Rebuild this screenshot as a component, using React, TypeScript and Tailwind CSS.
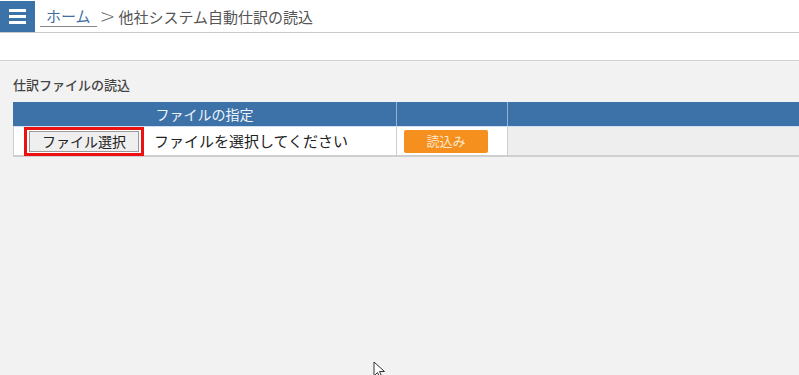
import React from "react";

export default function App() {
  return (
    <div
      className="relative w-[799px] h-[375px] overflow-hidden bg-[#f2f2f2] text-[#333]"
      style={{ fontFamily: '"Noto Sans CJK JP", "Noto Sans", sans-serif' }}
    >
      {/* top bar */}
      <div className="flex h-[33px] items-stretch bg-white border-b border-[#c9c9c9]">
        <div className="mt-[1px] flex w-[35px] flex-col items-center justify-center gap-[3px] bg-[#3b72a8]">
          <span className="block h-[3px] w-[17px] bg-white" />
          <span className="block h-[3px] w-[17px] bg-white" />
          <span className="block h-[3px] w-[17px] bg-white" />
        </div>
        <div className="flex items-center pl-[5px] text-[15px] leading-none text-[#555]">
          <span className="border-b border-[#888] px-[6px] pb-[3px] pt-[3px] text-[#3f6f9f]">ホーム</span>
          <span className="ml-[3px] text-[19px] font-light text-[#666]" style={{ fontFamily: '"DejaVu Sans", sans-serif' }}>&gt;</span>
          <span className="ml-[3px]">他社システム自動仕訳の読込</span>
        </div>
      </div>
      {/* white strip */}
      <div className="h-[28px] bg-white border-b border-[#d2d2d2]" />
      {/* content */}
      <div className="pl-[13px] pt-[15px]">
        <div className="text-[13px] leading-[18px] font-medium text-[#444]">仕訳ファイルの読込</div>
        <div className="mt-[8px] grid grid-cols-[383px_111px_1fr] border-b-2 border-[#cfcfcf]">
          <div className="flex h-[24px] items-center justify-center bg-[#3c72a8] text-[14px] text-[#eef4fb]">
            ファイルの指定
          </div>
          <div className="h-[24px] bg-[#3c72a8] border-l border-[#8fb2d6]" />
          <div className="h-[24px] bg-[#3c72a8] border-l border-[#8fb2d6]" />

          <div className="flex h-[29px] items-center bg-white border-l border-[#cfcfcf] border-t border-t-[#cfe0f2]">
            <div className="ml-[10px] flex h-[29px] w-[120px] items-center justify-center border-[3px] border-[#ee1111]">
              <div className="flex h-[21px] w-[110px] items-center justify-center border border-[#9a9a9a] bg-[#efefef] text-[14px] text-[#222]">
                ファイル選択
              </div>
            </div>
            <span className="ml-[10px] text-[15px] text-[#222]">ファイルを選択してください</span>
          </div>
          <div className="flex h-[29px] items-center bg-white border-l border-[#cfcfcf] border-t border-t-[#cfe0f2]">
            <div className="ml-[7px] flex h-[23px] w-[84px] items-center justify-center rounded-[2px] bg-[#f5901e] text-[13px] text-[#fde8cf]">
              読込み
            </div>
          </div>
          <div className="h-[29px] bg-[#eeeeee] border-l border-[#cfcfcf] border-t border-t-[#cfe0f2]" />
        </div>
      </div>
      {/* mouse cursor */}
      <svg className="absolute left-[373px] top-[361px]" width="14" height="18" viewBox="0 0 14 18">
        <path d="M1 1 L1 15 L4.5 11.5 L7 17 L9 16 L6.5 10.5 L11.5 10.5 Z" fill="white" stroke="#333" strokeWidth="1" />
      </svg>
    </div>
  );
}
